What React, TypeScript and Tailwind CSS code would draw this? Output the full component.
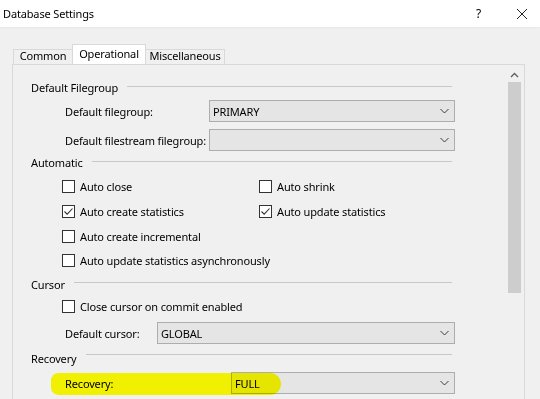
import type { ReactNode } from "react";

function Chevron() {
  return (
    <svg width="9" height="6" viewBox="0 0 9 6" className="shrink-0">
      <path d="M0.5 1 L4.5 5 L8.5 1" fill="none" stroke="#3c3c3c" strokeWidth="1" />
    </svg>
  );
}

function Select({ value }: { value: string }) {
  return (
    <div className="flex h-[22px] flex-1 items-center justify-between border border-[#adadad] bg-[#e5e5e5] pl-[3px] pr-[5px]">
      <span>{value}</span>
      <Chevron />
    </div>
  );
}

function Checkbox({ label, checked }: { label: string; checked?: boolean }) {
  return (
    <div className="flex items-center gap-[5px]">
      <div className="flex h-[13px] w-[13px] items-center justify-center border border-[#333] bg-white">
        {checked ? (
          <svg width="11" height="11" viewBox="0 0 11 11">
            <path d="M1.5 5.5 L4.2 8.2 L9.5 2.5" fill="none" stroke="#333" strokeWidth="1.1" />
          </svg>
        ) : null}
      </div>
      <span>{label}</span>
    </div>
  );
}

function Header({ title, h, lineTop }: { title: string; h: string; lineTop: string }) {
  return (
    <div className={`flex pl-[18px] pr-[3px] ${h}`}>
      <span className="self-center">{title}</span>
      <div className={`ml-[9px] h-px flex-1 bg-[#c8c8c8] ${lineTop}`} />
    </div>
  );
}

function FieldRow({ label, labelW, value, className = "", children }: { label: string; labelW: string; value: string; className?: string; children?: ReactNode }) {
  return (
    <div className={`relative flex h-[22px] items-center pl-[52px] ${className}`}>
      {children}
      <span className={`${labelW} relative`}>{label}</span>
      <Select value={value} />
    </div>
  );
}

export default function App() {
  return (
    <div
      className="h-[399px] w-[540px] overflow-hidden whitespace-nowrap bg-[#f0f0f0] text-[11px] leading-none tracking-[-0.15px] text-black"
      style={{ fontFamily: '"Noto Sans", "Open Sans", sans-serif' }}
    >
      {/* title bar */}
      <div className="flex h-[27px] items-center bg-white pl-[3px] pr-[12px] shadow-[0_1px_2px_rgba(0,0,0,0.04)]">
        <span className="flex-1">Database Settings</span>
        <span className="mr-[35px] text-[12px]">?</span>
        <svg width="12" height="12" viewBox="0 0 12 12">
          <path d="M1 1 L11 11 M11 1 L1 11" stroke="#222" strokeWidth="1" />
        </svg>
      </div>

      <div className="pl-[12px] pt-[17px]">
        {/* tabs */}
        <div className="flex h-[20px] items-end pl-[1px]">
          <div className="flex h-[15px] w-[59px] items-center justify-center border-l border-t border-[#d9d9d9] pb-[3px]">Common</div>
          <div className="flex h-[20px] w-[74px] items-center justify-center border-x border-t border-[#d9d9d9] bg-white pb-[3px]">Operational</div>
          <div className="flex h-[15px] w-[79px] items-center justify-center border-r border-t border-[#d9d9d9] pb-[3px]">Miscellaneous</div>
        </div>

        {/* panel */}
        <div className="flex h-[360px] w-[513px] border border-[#d9d9d9]">
          <div className="w-[494px] pr-[52px] pt-[10px]">
            <Header title="Default Filegroup" h="h-[24px]" lineTop="mt-[11px]" />
            <FieldRow label="Default filegroup:" labelW="w-[144px]" value="PRIMARY" className="mt-px" />
            <FieldRow label="Default filestream filegroup:" labelW="w-[144px]" value="" className="mt-[7px]" />

            <Header title="Automatic" h="h-[23px]" lineTop="mt-[10px]" />
            <div className="flex h-[25px] items-center pl-[49px]">
              <div className="w-[197px]"><Checkbox label="Auto close" /></div>
              <Checkbox label="Auto shrink" />
            </div>
            <div className="flex h-[25px] items-center pl-[49px]">
              <div className="w-[197px]"><Checkbox label="Auto create statistics" checked /></div>
              <Checkbox label="Auto update statistics" checked />
            </div>
            <div className="flex h-[24px] items-center pl-[49px]">
              <Checkbox label="Auto create incremental" />
            </div>
            <div className="flex h-[24px] items-center pl-[49px]">
              <Checkbox label="Auto update statistics asynchronously" />
            </div>

            <Header title="Cursor" h="h-[24px]" lineTop="mt-[10px]" />
            <div className="flex h-[20px] items-center pl-[49px]">
              <Checkbox label="Close cursor on commit enabled" />
            </div>
            <FieldRow label="Default cursor:" labelW="w-[92px]" value="GLOBAL" className="mt-[6px]" />

            <Header title="Recovery" h="h-[28px]" lineTop="mt-[10px]" />
            <FieldRow label="Recovery:" labelW="w-[166px]" value="FULL">
              <div className="pointer-events-none absolute left-[38px] top-[1px] z-10 h-[22px] w-[230px] rounded-l-[8px] rounded-r-[12px] bg-[#ffff00] mix-blend-multiply" />
            </FieldRow>
          </div>

          {/* scrollbar */}
          <div className="mt-[2px] flex w-[15px] flex-col items-center">
            <div className="flex h-[15px] w-full items-center justify-center">
              <svg width="9" height="6" viewBox="0 0 9 6">
                <path d="M1 5 L4.5 1.5 L8 5" fill="none" stroke="#606060" strokeWidth="1.4" />
              </svg>
            </div>
            <div className="h-[211px] w-[13px] bg-[#cdcdcd]" />
          </div>
        </div>
      </div>
    </div>
  );
}
